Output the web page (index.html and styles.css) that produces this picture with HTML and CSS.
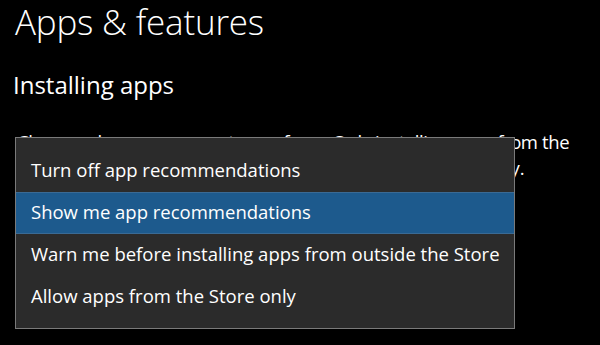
FILE: index.html
```html
<!DOCTYPE html>
<html lang="en">
<head>
<meta charset="utf-8">
<link rel="stylesheet" href="styles.css">
</head>
<body>
<main class="page">
  <h1 class="title">Apps &amp; features</h1>
  <h2 class="subtitle">Installing apps</h2>
  <div class="setting">
    <p class="desc">Choose where you can get apps from. Only installing apps from the <span class="rest">Store helps protect your PC and keeps it running smoothly.</span></p>
    <ul class="menu">
      <li class="item">Turn off app recommendations</li>
      <li class="item selected">Show me app recommendations</li>
      <li class="item">Warn me before installing apps from outside the Store</li>
      <li class="item">Allow apps from the Store only</li>
    </ul>
  </div>
</main>
</body>
</html>
```
FILE: styles.css
```css
html, body {
  margin: 0;
  padding: 0;
  background: #000;
  width: 600px;
  height: 345px;
  overflow: hidden;
}
.page {
  font-family: "Open Sans", "Noto Sans", sans-serif;
  color: #fff;
  padding: 0 0 0 15px;
}
.title {
  margin: 0;
  font-weight: 300;
  font-size: 35px;
  line-height: 44px;
  letter-spacing: -0.2px;
}
.subtitle {
  margin: 26px 0 0 -2px;
  font-weight: 400;
  font-size: 24px;
  line-height: 30px;
}
.setting {
  position: relative;
  margin-top: 29px;
}
.desc {
  margin: 0 0 0 2px;
  width: 566px;
  font-size: 18.5px;
  line-height: 26px;
  letter-spacing: -0.4px;
}
.rest {
  letter-spacing: 0;
}
.menu {
  position: absolute;
  top: 8px;
  left: 0;
  width: 498px;
  margin: 0;
  padding: 12px 0 10px;
  list-style: none;
  background: #2b2b2b;
  border: 1px solid #7a7a7a;
  font-size: 18.5px;
}
.item {
  height: 42px;
  line-height: 40px;
  padding: 0 0 0 15px;
  white-space: nowrap;
  box-sizing: border-box;
}
.selected {
  background: #1d5a8d;
  box-shadow: inset 0 1px 0 #3a6a94, inset 0 -1px 0 #3a6a94;
}
```
